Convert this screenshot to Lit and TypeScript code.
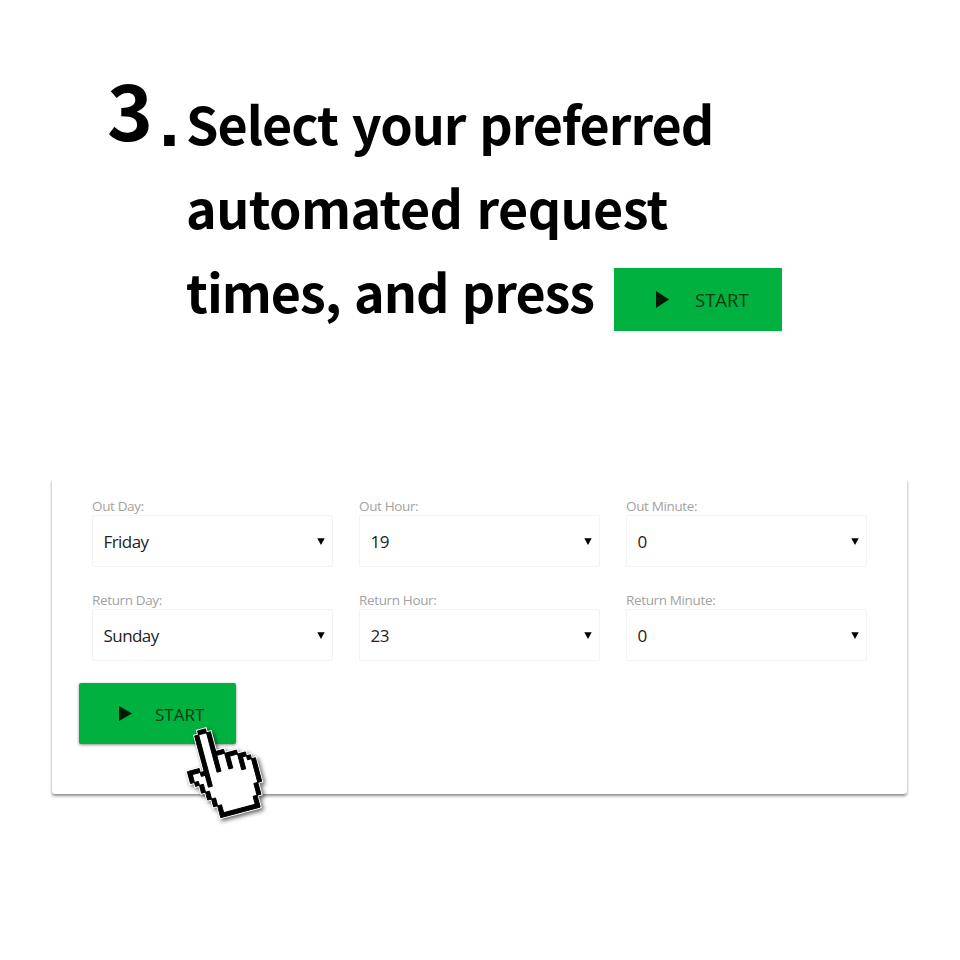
import { LitElement, html, css, svg } from "lit";
import { customElement } from "lit/decorators.js";

const HAND = [
  ".....XX..........",
  "....XooX.........",
  "....XooX.........",
  "....XooX.........",
  "....XooX.........",
  "....XooX.........",
  "....XooXXX.......",
  "....XooXooXXX....",
  "....XooXooXooXX..",
  "XXX.XooXooXooXoX.",
  "XooXXooXooXooXooX",
  "XoooXooooooooXooX",
  ".XooXoooooooooooX",
  "..XoXoooooooooooX",
  "..XoooooooooooooX",
  "...XooooooooooooX",
  "...XoooooooooooX.",
  "....XooooooooooX.",
  "....XooooooooooX.",
  ".....XooooooooX..",
  ".....XooooooooX..",
  ".....XXXXXXXXXX..",
];

const cells = (match: (c: string) => boolean) =>
  HAND.flatMap((row, y) =>
    [...row].map((c, x) => (match(c) ? `M${x} ${y}h1v1h-1z` : ""))
  ).join("");

const ROWS = [
  [
    { label: "Out Day:", value: "Friday" },
    { label: "Out Hour:", value: "19" },
    { label: "Out Minute:", value: "0" },
  ],
  [
    { label: "Return Day:", value: "Sunday" },
    { label: "Return Hour:", value: "23" },
    { label: "Return Minute:", value: "0" },
  ],
];

@customElement("app-root")
export class AppRoot extends LitElement {
  static styles = css`
    :host {
      display: block;
      position: relative;
      width: 960px;
      height: 960px;
      overflow: hidden;
      background: #fff;
      color: #000;
      font-family: "Open Sans", "Noto Sans", sans-serif;
    }
    .intro {
      display: flex;
      box-sizing: border-box;
      height: 480px;
      padding: 81px 0 0 107px;
      font-family: "Noto Sans CJK KR", "Noto Sans", sans-serif;
      font-weight: 700;
    }
    .step {
      display: flex;
      align-items: baseline;
      width: 79px;
      height: 62px;
      line-height: 52px;
      font-size: 78px;
    }
    .dot {
      margin: 0 0 0 6px;
      font-family: "Liberation Sans", sans-serif;
      font-size: 75px;
      line-height: 52px;
      transform: translateY(5px);
    }
    .copy {
      font-size: 52px;
      line-height: 84px;
      white-space: nowrap;
    }
    .line {
      display: flex;
      height: 84px;
    }
    .l1 { letter-spacing: -1px; word-spacing: 3px; }
    .l2 { letter-spacing: -0.6px; word-spacing: 3px; }
    .l3 { width: 408px; letter-spacing: -1px; word-spacing: 2.5px; }
    .start {
      display: flex;
      align-items: center;
      box-sizing: border-box;
      background: #00b140;
      color: #083d12;
      font-weight: 400;
      font-family: "Open Sans", "Noto Sans", sans-serif;
    }
    .start svg { display: block; fill: #021a06; }
    .big {
      width: 168px;
      height: 63px;
      margin: 19px 0 0 20px;
      padding-left: 42px;
      font-size: 18.5px;
      line-height: 24px;
    }
    .big svg { width: 13px; height: 17px; margin-right: 26px; }
    .small {
      width: 157px;
      height: 61px;
      margin: -2px 0 0 27px;
      padding: 1px 0 0 40px;
      border-radius: 2px;
      font-size: 17px;
      line-height: 23px;
      box-shadow: 0 1px 3px rgba(0, 0, 0, 0.45);
    }
    .small svg { width: 13px; height: 15px; margin: -1px 23px 0 0; }
    .card {
      box-sizing: border-box;
      width: 855px;
      height: 314px;
      margin-left: 52px;
      padding-top: 17px;
      border-radius: 0 0 3px 3px;
      box-shadow: 0 1.5px 3px rgba(0, 0, 0, 0.45);
      clip-path: inset(0 -8px -8px -8px);
    }
    .fields {
      display: grid;
      grid-template-columns: repeat(3, 241px);
      gap: 0 26px;
      height: 94px;
      padding-left: 40px;
    }
    .label {
      height: 18px;
      line-height: 18px;
      font-size: 13.5px;
      letter-spacing: -0.36px;
      color: #a2a2a2;
      white-space: nowrap;
    }
    .select {
      display: flex;
      align-items: center;
      justify-content: space-between;
      box-sizing: border-box;
      height: 52px;
      padding: 1px 7px 0 10.5px;
      border: 1px solid #f3f3f3;
      border-radius: 2px;
      font-size: 17px;
      letter-spacing: -0.55px;
      color: #222;
    }
    .select svg { width: 8px; height: 7px; margin-top: -1px; fill: #000; }
    .hand {
      position: absolute;
      left: 170px;
      top: 715px;
      width: 110px;
      height: 115px;
      overflow: visible;
      filter: drop-shadow(2px 2px 2px rgba(0, 0, 0, 0.6));
    }
  `;

  private play() {
    return html`<svg viewBox="0 0 13 16" preserveAspectRatio="none"><path d="M0 0L13 8L0 16z" /></svg>`;
  }

  render() {
    return html`
      <section class="intro">
        <div class="step"><span>3</span><span class="dot">.</span></div>
        <div class="copy">
          <div class="line"><span class="l1">Select your preferred</span></div>
          <div class="line"><span class="l2">automated request</span></div>
          <div class="line">
            <span class="l3">times, and press</span>
            <div class="start big">${this.play()}<span>START</span></div>
          </div>
        </div>
      </section>
      <section class="card">
        ${ROWS.map(
          (row) => html`<div class="fields">
            ${row.map(
              (f) => html`<div>
                <div class="label">${f.label}</div>
                <div class="select">
                  <span>${f.value}</span>
                  <svg viewBox="0 0 8 7"><path d="M0.3 0.3H7.7L4 7z" /></svg>
                </div>
              </div>`
            )}
          </div>`
        )}
        <div class="start small">${this.play()}<span>START</span></div>
      </section>
      <svg class="hand" viewBox="0 0 110 115">
        ${svg`<g transform="translate(31.5 14.9) rotate(-15) scale(4.08) translate(-6 0)">
          <path d=${cells((c) => c !== ".")} fill="#fff" stroke="#fff" stroke-width="0.7" />
          <path d=${cells((c) => c === "X")} fill="#000" stroke="#000" stroke-width="0.22" />
        </g>`}
      </svg>
    `;
  }
}
